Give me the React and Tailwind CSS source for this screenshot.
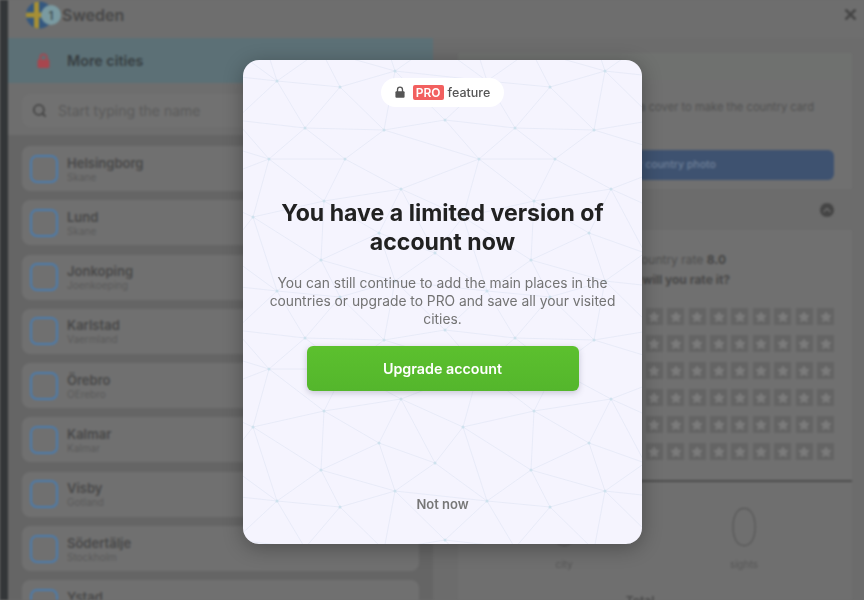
import React from 'react';
import { Search, X, ChevronUp, Star } from 'lucide-react';

const cities = [
  ['Helsingborg', 'Skane'],
  ['Lund', 'Skane'],
  ['Jonkoping', 'Joenkoeping'],
  ['Karlstad', 'Vaermland'],
  ['Örebro', 'OErebro'],
  ['Kalmar', 'Kalmar'],
  ['Visby', 'Gotland'],
  ['Södertälje', 'Stockholm'],
  ['Ystad', 'Skane'],
];

// background mesh of the modal, repeats every 210px both ways
const TILE = 210;
const nodes = [
  [34, 21], [97, 27], [152, 11], [202, 60], [62, 68], [141, 70], [26, 99],
  [102, 99], [158, 129], [81, 141], [10, 157], [136, 173], [192, 193], [78, 200],
];
// from, to, tile shift x, tile shift y of the "to" node
const edges = [
  [0, 1, 0, 0], [1, 2, 0, 0], [0, 4, 0, 0], [1, 4, 0, 0], [1, 5, 0, 0], [2, 5, 0, 0],
  [4, 5, 0, 0], [5, 3, 0, 0], [2, 3, 0, 0], [3, 4, 1, 0], [3, 6, 1, 0], [5, 6, 1, 0],
  [4, 6, 0, 0], [4, 7, 0, 0], [5, 7, 0, 0], [6, 7, 0, 0], [7, 9, 0, 0], [7, 8, 0, 0],
  [6, 9, 0, 0], [6, 10, 0, 0], [10, 9, 0, 0], [9, 8, 0, 0], [8, 6, 1, 0], [8, 10, 1, 0],
  [8, 11, 0, 0], [9, 11, 0, 0], [10, 13, 0, 0], [10, 0, 0, 1], [9, 13, 0, 0], [13, 11, 0, 0],
  [11, 12, 0, 0], [8, 12, 0, 0], [12, 10, 1, 0], [13, 2, 0, 1], [12, 2, 0, 1], [11, 2, 0, 1],
  [12, 0, 1, 1], [13, 1, 0, 1], [13, 0, 0, 1], [2, 0, 1, 0], [3, 0, 1, 0],
];
const shifts = [];
for (let i = -1; i < 3; i++) {
  for (let j = -1; j < 3; j++) shifts.push([i * TILE, j * TILE]);
}

function Mesh() {
  return (
    <svg className="absolute inset-0" width="399" height="484" viewBox="0 0 399 484">
      {shifts.map(([sx, sy]) => (
        <g key={`${sx}-${sy}`}>
          {edges.map(([a, b, tx, ty], i) => (
            <line
              key={i}
              x1={nodes[a][0] + sx}
              y1={nodes[a][1] + sy}
              x2={nodes[b][0] + sx + tx * TILE}
              y2={nodes[b][1] + sy + ty * TILE}
              stroke="#e4e9f6"
              strokeWidth="0.8"
            />
          ))}
          {nodes.map(([x, y], i) => (
            <circle key={i} cx={x + sx} cy={y + sy} r="1.5" fill="#cfe2ee" />
          ))}
        </g>
      ))}
    </svg>
  );
}

function Flag() {
  return (
    <svg width="36" height="28" viewBox="0 0 36 28" className="shrink-0">
      <defs>
        <clipPath id="flagClip">
          <circle cx="13.5" cy="14" r="13.5" />
        </clipPath>
      </defs>
      <g clipPath="url(#flagClip)">
        <rect width="28" height="28" fill="#35587f" />
        <rect x="8" width="5" height="28" fill="#a68f35" />
        <rect y="11.5" width="28" height="5" fill="#a68f35" />
      </g>
      <circle cx="25" cy="14" r="10" fill="#7a9aa1" />
      <text x="25" y="18.5" textAnchor="middle" fontSize="12" fontWeight="500" fill="#3c4a4d">1</text>
    </svg>
  );
}

// padlock with a solid body, lucide's outline one closes up when filled
function Padlock({ width, height, color, className }) {
  return (
    <svg width={width} height={height} viewBox="0 0 12 14" className={className}>
      <path d="M3 7V4.2a3 3 0 0 1 6 0V7" fill="none" stroke={color} strokeWidth="1.6" />
      <rect x="0.5" y="6" width="11" height="8" rx="1.2" fill={color} />
    </svg>
  );
}

function CityRow({ name, region }) {
  return (
    <div className="flex h-[45px] shrink-0 items-center gap-[9px] rounded-lg bg-[#707070] pl-2">
      <div className="h-[28px] w-[28px] rounded-[7px] border-2 border-[#4a7cae]" />
      <div>
        <div className="text-[13px] leading-[16px] font-semibold text-[#484848]">{name}</div>
        <div className="text-[10px] leading-[12px] text-[#5a5a5a]">{region}</div>
      </div>
    </div>
  );
}

function StarRow() {
  return (
    <div className="flex justify-end gap-[4.4px]">
      {Array.from({ length: 10 }).map((_, i) => (
        <div key={i} className="flex h-[17px] w-[17px] items-center justify-center bg-[#646464]">
          <Star size={12} fill="#7b7b7b" stroke="#7b7b7b" />
        </div>
      ))}
    </div>
  );
}

export default function App() {
  return (
    <div className="relative h-[600px] w-[864px] overflow-hidden bg-[#6c6c6c] font-['Inter','Liberation_Sans',sans-serif]">
      <div className="flex h-full blur-[1.3px]">
        <div className="w-2 shrink-0 bg-[#333638]" />

        <div className="flex min-w-0 flex-1 flex-col">
          <div className="flex h-[38px] shrink-0 items-start justify-between bg-[#6e6e6e] pt-[1px] pr-[5px] pl-[18px]">
            <div className="flex items-center">
              <Flag />
              <span className="text-[16px] font-semibold text-[#474747]">Sweden</span>
            </div>
            <X size={17} strokeWidth={3.5} className="mt-[5px] text-[#454545]" />
          </div>

          <div className="flex min-h-0 flex-1">
            <div className="flex w-[425px] shrink-0 flex-col">
              <div className="flex h-[45px] shrink-0 items-center gap-[17px] bg-[#5c7076] pl-[29px]">
                <Padlock width={13} height={15} color="#a8464e" />
                <span className="text-[14.3px] font-semibold text-[#373e41]">More cities</span>
              </div>
              <div className="flex h-[52px] shrink-0 items-center bg-[#6e6e6e] px-[14px] pt-[2px]">
                <div className="flex h-[33px] w-full items-center gap-[11px] rounded-lg bg-[#717171] pl-[10px]">
                  <Search size={15} strokeWidth={3} className="text-[#454545]" />
                  <span className="text-[14px] text-[#5a5a5a]">Start typing the name</span>
                </div>
              </div>
              <div className="flex min-h-0 flex-1 flex-col gap-[9.3px] overflow-hidden bg-[#656565] pt-[11px] pr-[14px] pl-[14px]">
                {cities.map(([name, region]) => (
                  <CityRow key={name} name={name} region={region} />
                ))}
              </div>
            </div>

            <div className="flex min-w-0 flex-1 flex-col pt-[15px] pr-[12px] pl-[25px]">
              <div className="shrink-0 bg-[#707070]">
                <div className="h-[27px] bg-[#6f716f]" />
                <div className="flex h-[109px] flex-col pr-[18px] pl-[19px]">
                  <p className="mt-[20px] h-[50px] pr-[20px] text-right text-[11.2px] leading-[14px] whitespace-nowrap text-[#505050]">
                    Upload a photo as a cover to make the country card
                  </p>
                  <div className="flex h-[30px] items-center justify-center rounded-md bg-[#3e5270] pr-[14px] text-[10.5px] font-medium text-[#6f8099]">
                    Upload your country photo
                  </div>
                </div>
              </div>

              <div className="flex h-[41px] shrink-0 items-center justify-end pr-[18px]">
                <div className="flex h-[14px] w-[14px] items-center justify-center rounded-full bg-[#454545]">
                  <ChevronUp size={12} strokeWidth={3} className="text-[#6c6c6c]" />
                </div>
              </div>

              <div className="h-[252px] shrink-0 border-b-2 border-[#4c4c4c] bg-[#707070] pr-[10px]">
                <div className="pt-[22px] pr-[16px] text-right">
                  <div className="pr-[100px] text-[12px] leading-[16px] text-[#4f4f4f]">
                    Country rate <b className="font-bold text-[#454545]">8.0</b>
                  </div>
                  <div className="mt-[4px] pr-[96px] text-[12px] leading-[16px] font-bold text-[#484848]">
                    How will you rate it?
                  </div>
                </div>
                <div className="mt-[20px] flex flex-col gap-[10px] pr-[8px]">
                  {[0, 1, 2, 3, 4, 5].map((row) => (
                    <StarRow key={row} />
                  ))}
                </div>
              </div>

              <div className="flex min-h-0 flex-1 flex-col bg-[#6f6f6f]">
                <div className="flex justify-end">
                  <div className="flex w-[180px] flex-col items-center pt-[23px]">
                    <span className="text-[52px] leading-[46px] font-thin text-[#565656]">0</span>
                    <span className="mt-[7px] text-[10px] leading-[12px] text-[#565656]">city</span>
                  </div>
                  <div className="flex w-[180px] flex-col items-center pt-[23px]">
                    <span className="text-[52px] leading-[46px] font-thin text-[#565656]">0</span>
                    <span className="mt-[7px] text-[10px] leading-[12px] text-[#565656]">sights</span>
                  </div>
                  <div className="w-[18px]" />
                </div>
                <div className="mt-[24px] pr-[30px] text-center text-[12px] leading-[14px] font-semibold text-[#4a4a4a]">
                  Total
                </div>
              </div>
            </div>
          </div>
        </div>
      </div>

      <div className="absolute top-[60px] left-[243px] flex h-[484px] w-[399px] flex-col items-center overflow-hidden rounded-[16px] bg-[#f5f4fe] shadow-[0_4px_20px_rgba(0,0,0,0.3)]">
        <Mesh />
        <div className="relative mt-[18px] flex h-[29px] w-[123px] items-center justify-center gap-[4px] rounded-full bg-white">
          <Padlock width={10} height={12} color="#555555" className="mr-[4px] mb-[2px]" />
          <span className="rounded-[2px] bg-[#f2605f] px-[3px] text-[12px] leading-[15px] font-semibold text-white">PRO</span>
          <span className="pt-[1px] text-[12.5px] font-medium text-[#555555]">feature</span>
        </div>
        <h1 className="relative mt-[92px] w-[345px] text-center text-[23.1px] leading-[29px] font-bold text-[#212121]">
          You have a limited version of account now
        </h1>
        <p className="relative mt-[17px] w-[360px] text-center text-[13.8px] leading-[18px] text-[#737373]">
          You can still continue to add the main places in the countries or upgrade to PRO and save all your visited cities.
        </p>
        <button className="relative mt-[18px] h-[45px] w-[272px] rounded-md bg-linear-to-b from-[#5cc02e] to-[#54b62c] text-[14.3px] font-semibold text-white shadow-[0_2px_6px_rgba(60,60,90,0.25)]">
          Upgrade account
        </button>
        <span className="relative mt-[104px] text-[13px] font-semibold text-[#777777]">Not now</span>
      </div>
    </div>
  );
}
